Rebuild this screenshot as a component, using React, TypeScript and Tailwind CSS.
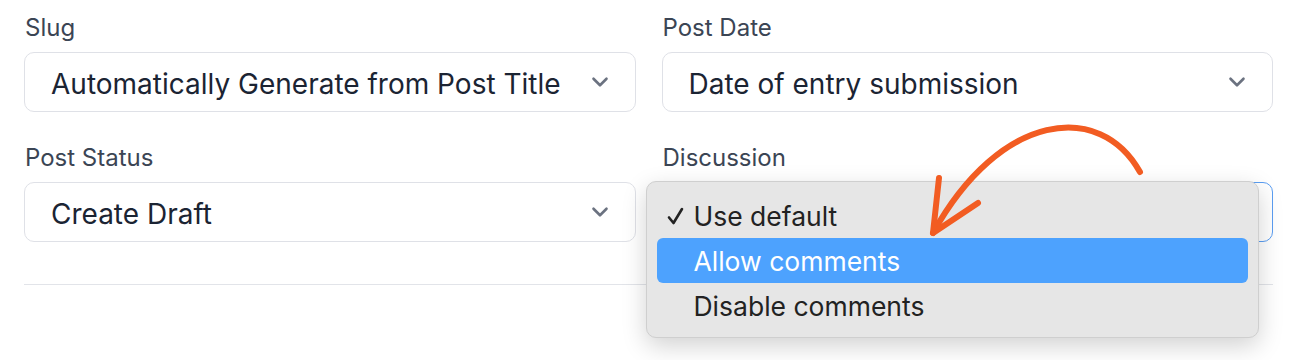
import { ChevronDown } from "lucide-react";

const FONT = { fontFamily: "Inter, 'Noto Sans', sans-serif" };

function Field({
  label,
  value,
  focused = false,
  children,
}: {
  label: string;
  value?: string;
  focused?: boolean;
  children?: React.ReactNode;
}) {
  return (
    <div className="flex flex-col">
      <div className="mb-[10px] h-[28px] pl-px text-[24px] leading-[28px] text-[#3b4554]">
        {label}
      </div>
      <div className="relative">
        <div
          className={
            focused
              ? "flex h-[60px] items-center justify-between rounded-[10px] border-[1.5px] border-[#5b9ef2] bg-white pl-[26px] pr-[22px]"
              : "flex h-[60px] items-center justify-between rounded-[10px] border border-[#dfe1e7] bg-white pl-[26px] pr-[22px]"
          }
        >
          <span className="pt-[3px] text-[28px] leading-none text-[#1b2433]">{value}</span>
          <ChevronDown className="h-[26px] w-[26px] text-[#6b7280]" strokeWidth={2.4} />
        </div>
        {children}
      </div>
    </div>
  );
}

function Check() {
  return (
    <svg
      className="absolute left-[10px] top-1/2 -translate-y-1/2"
      width="17"
      height="18"
      viewBox="0 0 17 18"
      fill="none"
      stroke="#222222"
      strokeWidth={2.6}
      strokeLinecap="round"
      strokeLinejoin="round"
    >
      <path d="M2 10.5 L6.5 16 L15 2" />
    </svg>
  );
}

function DiscussionMenu() {
  const items = [
    { label: "Use default", checked: true, active: false },
    { label: "Allow comments", checked: false, active: true },
    { label: "Disable comments", checked: false, active: false },
  ];
  return (
    <div
      className="absolute left-[-16px] top-[-1px] z-10 w-[613px] rounded-[10px] border border-[#cfcfcf] bg-[#e6e6e6] px-[10px] pb-[9px] pt-[11px] shadow-[0_8px_24px_rgba(0,0,0,0.18)]"
      style={FONT}
    >
      {items.map((item) => (
        <div
          key={item.label}
          className={
            item.active
              ? "relative flex h-[45px] items-center rounded-[6px] bg-[#4da2fe] pl-[37px] pt-[2px] text-[26.5px] text-white"
              : "relative flex h-[45px] items-center rounded-[6px] pl-[37px] pt-[2px] text-[26.5px] text-[#222222]"
          }
        >
          {item.checked && <Check />}
          {item.label}
        </div>
      ))}
    </div>
  );
}

export default function App() {
  return (
    <div className="relative h-[360px] w-[1300px] overflow-hidden bg-white" style={FONT}>
      <div className="pl-[24px] pr-[27px] pt-[14px]">
        <div className="grid grid-cols-2 gap-x-[26px] gap-y-[32px]">
          <Field label="Slug" value="Automatically Generate from Post Title" />
          <Field label="Post Date" value="Date of entry submission" />
          <Field label="Post Status" value="Create Draft" />
          <Field label="Discussion" focused>
            <DiscussionMenu />
          </Field>
        </div>
        <div className="mt-[42px] h-px bg-[#e2e4e9]" />
      </div>

      {/* hand-drawn annotation arrow */}
      <svg
        className="pointer-events-none absolute left-0 top-0 z-20"
        width="1300"
        height="360"
        viewBox="0 0 1300 360"
        fill="none"
        stroke="#f25c22"
        strokeWidth={6}
        strokeLinecap="round"
        strokeLinejoin="round"
      >
        <path d="M1140 172 C1100 100 1000 112 933 233" />
        <path d="M939 178 L933 233 L978 203" />
      </svg>
    </div>
  );
}
